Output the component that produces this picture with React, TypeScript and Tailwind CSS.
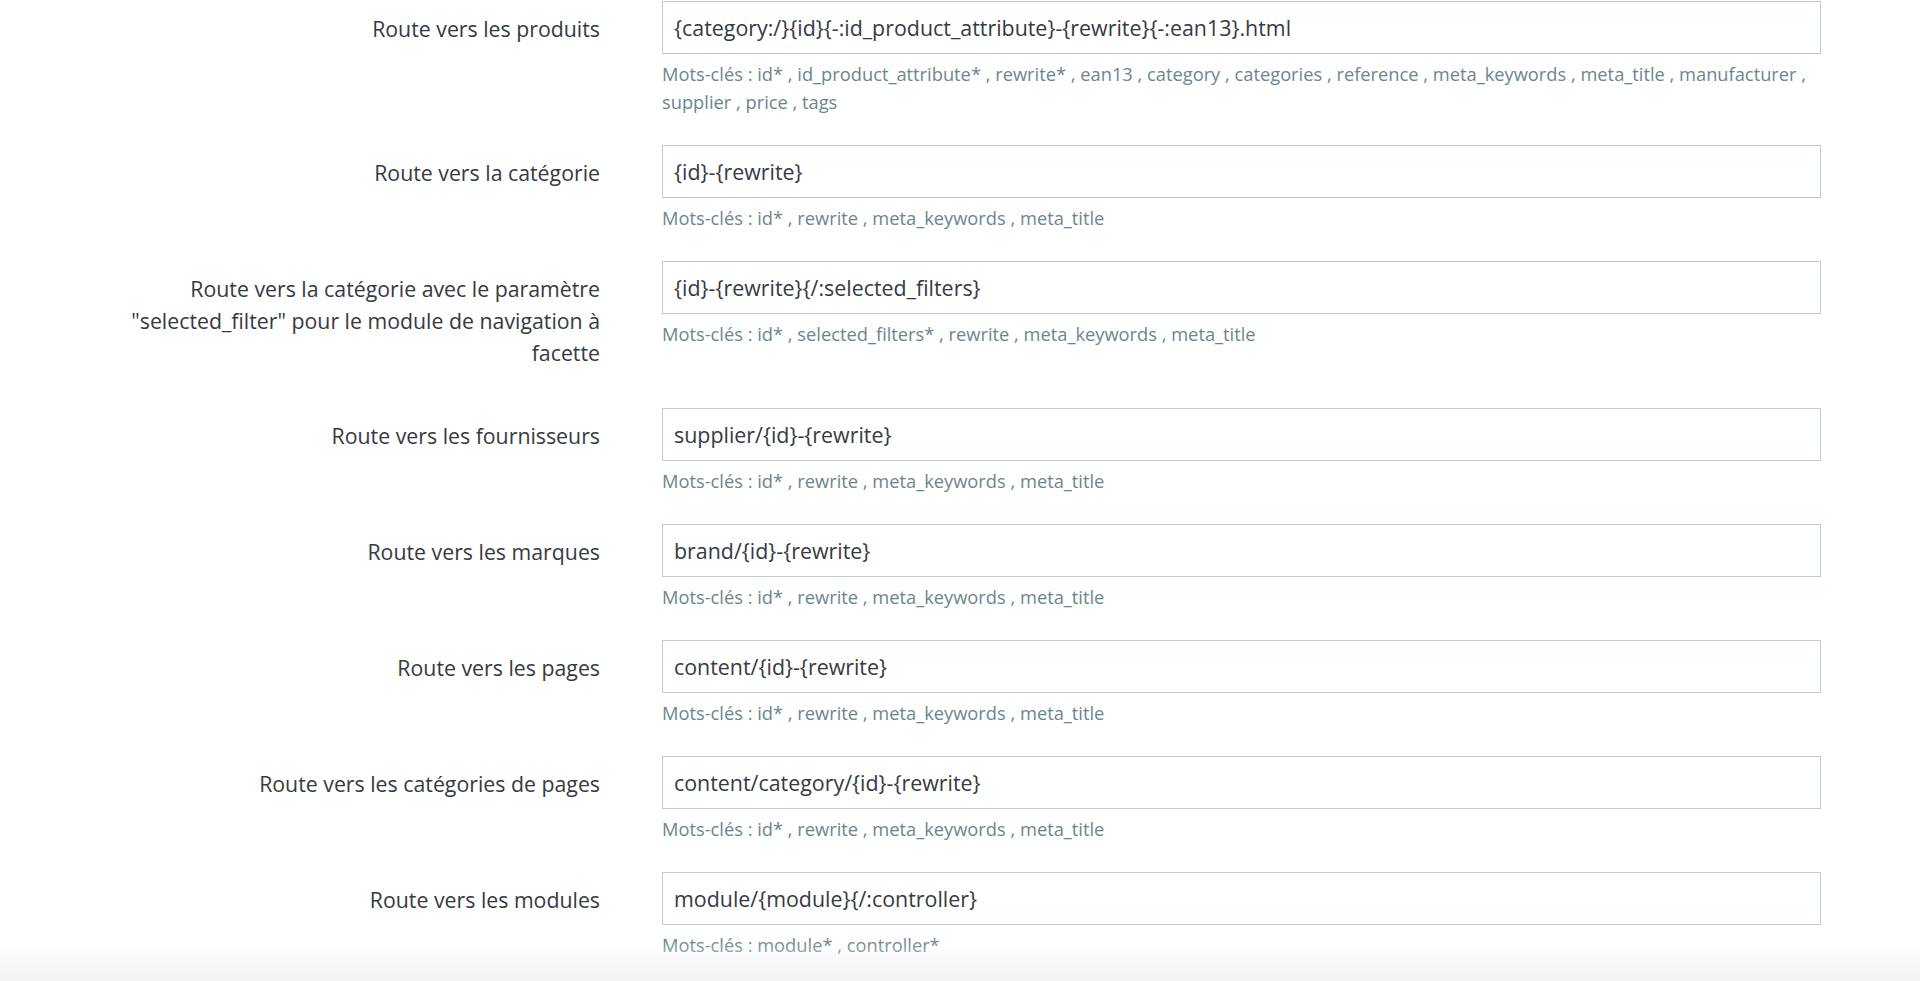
const meta = 'Mots-clés : id* , rewrite , meta_keywords , meta_title';

const routes = [
  {
    label: 'Route vers les produits',
    value: '{category:/}{id}{-:id_product_attribute}-{rewrite}{-:ean13}.html',
    help: 'Mots-clés : id* , id_product_attribute* , rewrite* , ean13 , category , categories , reference , meta_keywords , meta_title , manufacturer , supplier , price , tags',
  },
  { label: 'Route vers la catégorie', value: '{id}-{rewrite}', help: meta },
  {
    label: 'Route vers la catégorie avec le paramètre "selected_filter" pour le module de navigation à facette',
    value: '{id}-{rewrite}{/:selected_filters}',
    help: 'Mots-clés : id* , selected_filters* , rewrite , meta_keywords , meta_title',
  },
  { label: 'Route vers les fournisseurs', value: 'supplier/{id}-{rewrite}', help: meta },
  { label: 'Route vers les marques', value: 'brand/{id}-{rewrite}', help: meta },
  { label: 'Route vers les pages', value: 'content/{id}-{rewrite}', help: meta },
  { label: 'Route vers les catégories de pages', value: 'content/category/{id}-{rewrite}', help: meta },
  { label: 'Route vers les modules', value: 'module/{module}{/:controller}', help: 'Mots-clés : module* , controller*' },
];

export default function App() {
  return (
    <div className="relative h-screen overflow-hidden bg-white pt-px font-['Open_Sans',sans-serif]">
      {routes.map((r) => (
        <div key={r.label} className="mb-[29px] flex">
          <label className="ml-[95px] w-[505px] pt-3 pb-[10px] text-right text-[21.3px] leading-[32px] text-[#363a41]">
            {r.label}
          </label>
          <div className="ml-[62px] w-[1159px]">
            <input
              readOnly
              value={r.value}
              className="h-[53px] w-full border border-[#bbcdd2] bg-white px-[11px] text-[21.4px] text-[#363a41] outline-none"
            />
            <p className="mt-[6px] text-[18.3px] leading-[28px] text-[#6c868e]">{r.help}</p>
          </div>
        </div>
      ))}
      <div className="pointer-events-none absolute inset-x-0 bottom-0 h-10 bg-linear-to-b from-white/0 to-[#f3f3f3]" />
    </div>
  );
}
